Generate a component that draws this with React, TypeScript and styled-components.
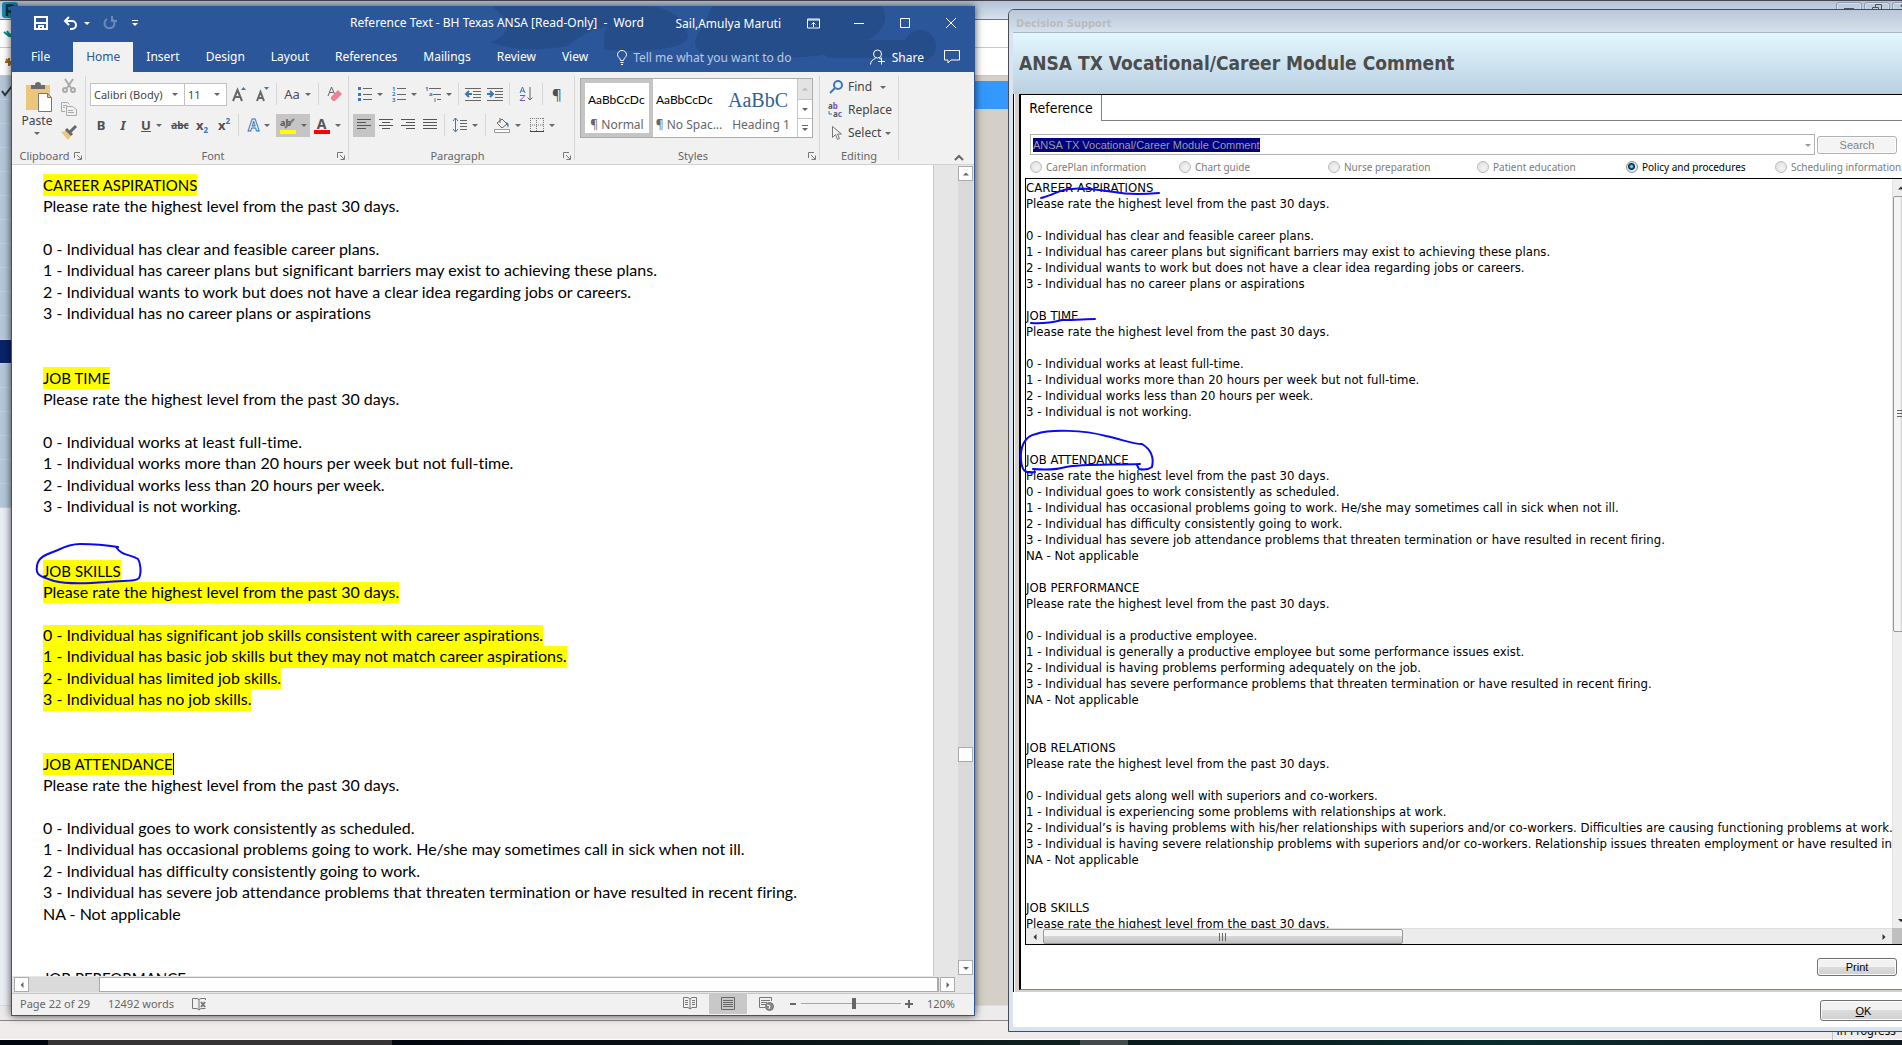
import React from 'react';
import styled, { createGlobalStyle, css } from 'styled-components';

const UI = '"Noto Sans", "Open Sans", sans-serif';
const TAHOMA = '"DejaVu Sans Condensed", "DejaVu Sans", sans-serif';
const CALIBRI = 'Lato, "Open Sans", sans-serif';
const SANS = '"Liberation Sans", sans-serif';
const WORD_BLUE = '#2b579a';

const GlobalStyle = createGlobalStyle`
  *, *::before, *::after { box-sizing: border-box; }
  html, body { margin: 0; background: #d4d0c8; overflow: hidden; }
  button, input, select { margin: 0; padding: 0; border: 0; background: none; color: inherit; font: inherit; border-radius: 0; }
  p, h1, h2 { margin: 0; font: inherit; }
`;

/* ---------- desktop ---------- */

const Desktop = styled.div`
  position: relative;
  display: grid;
  grid-template-columns: 964fr 894fr;
  column-gap: 33px;
  height: 100vh;
  padding: 6px 0 13px 11px;
  overflow: hidden;
  font-family: ${UI};
  font-size: 12px;
`;

const Backdrop = styled.div`
  position: absolute;
  inset: 0;
  display: flex;
  flex-direction: column;
  background: #d4d0c8;
`;
const BackTitle = styled.div`
  display: flex;
  justify-content: space-between;
  height: 20px;
  padding: 1px 0 0 2px;
  border-top: 1px solid #45454f;
  border-bottom: 1px solid #70747c;
  background: linear-gradient(#b4c2d4, #d6e2ef);
`;
const BackButtons = styled.div`
  display: flex;
  gap: 2px;
  margin-right: -16px;
`;
const BackButton = styled.button`
  width: 26px;
  height: 16px;
  border: 1px solid #8d99b0;
  border-radius: 3px;
  box-shadow: inset 0 0 0 1px #d8e1ec;
  display: flex;
  justify-content: center;
`;
const BackBar = styled.div`
  height: 28px;
  padding-left: 4px;
  display: flex;
  align-items: center;
  background: #fff;
  border-bottom: 1px solid #c9c9c9;
`;
const BackMain = styled.div`
  flex: 1;
  display: flex;
  min-height: 0;
`;
const Tree = styled.div`
  width: 203px;
  background: #ebeff5;
`;
const TreeRow = styled.div<{ $on?: boolean }>`
  height: 24px;
  padding: 7px 0 0 2px;
  background: ${p => (p.$on ? '#0a246a' : '#b5c7d9')};
  border-bottom: 1px solid #cdd0d2;
`;
const Band = styled.div`
  flex: 1;
  padding-top: 5px;
  &::before { content: ''; display: block; height: 28px; background: #3399ff; }
`;
const BackFoot = styled.div`
  height: 16px;
  background: #ececec;
  border-top: 1px solid #e0ddd8;
  border-bottom: 1px solid #8a8584;
`;
const BackStatus = styled.div`
  height: 19px;
  display: flex;
  justify-content: flex-end;
  align-items: center;
  padding-right: 6px;
  background: #f0eceb;
  border-bottom: 1px solid #fff;
  font: 12px/20px ${TAHOMA};
  span { border-left: 1px solid #c8c4c2; padding-left: 4px; height: 19px; }
`;
const Taskbar = styled.div`
  height: 5px;
  background: linear-gradient(90deg, #02060e 0 48px, #363435 48px 392px, #02060e 392px, #10201f 1080px, #44494b 1080px 1128px, #0b1a1c 1128px, #082c2d 1500px, #10181f);
`;

/* ---------- Word window ---------- */

const WordWindow = styled.section`
  position: relative;
  display: flex;
  flex-direction: column;
  min-width: 0;
  min-height: 0;
  margin-bottom: 16px;
  border: 1px solid ${WORD_BLUE};
  border-top: 0;
  background: #fff;
  box-shadow: 0 0 8px rgba(0, 0, 0, 0.7);
`;
const WordHeader = styled.header`
  position: relative;
  background: ${WORD_BLUE};
  color: #fff;
`;
const HeaderArt = styled.svg`
  position: absolute;
  right: 0;
  top: 0;
`;
const TitleRow = styled.div`
  position: relative;
  display: grid;
  grid-template-columns: 338px 1fr auto;
  align-items: center;
  height: 36px;
  padding-bottom: 2px;
`;
const QuickAccess = styled.div`
  display: flex;
  align-items: center;
  padding-left: 20px;
`;
const QuickButton = styled.button<{ $w: number; $faded?: boolean }>`
  width: ${p => p.$w}px;
  height: 24px;
  display: inline-flex;
  align-items: center;
  justify-content: center;
  gap: 6px;
  opacity: ${p => (p.$faded ? 0.3 : 1)};
`;
const DocTitle = styled.h1`
  white-space: pre;
  line-height: 18px;
`;
const WindowControls = styled.div`
  display: flex;
  align-items: center;
`;
const UserName = styled.span`
  margin-right: 9px;
  white-space: nowrap;
`;
const WinButton = styled.button`
  width: 46px;
  height: 34px;
  display: grid;
  place-items: center;
`;
const TabRow = styled.nav`
  position: relative;
  display: flex;
  height: 30px;
  padding-right: 14px;
`;
const Tab = styled.button<{ $on?: boolean }>`
  padding: 0 13px;
  line-height: 30px;
  ${p => p.$on && css`background: #f1f1f1; color: ${WORD_BLUE};`}
  &:first-child { padding: 0 23px 0 19px; }
`;
const TellMe = styled.label`
  display: flex;
  align-items: center;
  gap: 5px;
  margin-left: 16px;
  flex: 1;
  input { width: 180px; color: #b9c9e2; }
  input::placeholder { color: #b9c9e2; opacity: 1; }
`;
const ShareButton = styled.button`
  display: flex;
  align-items: center;
  gap: 6px;
  margin-left: 20px;
`;

const Ribbon = styled.div`
  display: flex;
  height: 93px;
  padding-top: 4px;
  background: #f1f1f1;
  border-bottom: 1px solid #d2d2d2;
  color: #444;
`;
const Group = styled.section<{ $w: number }>`
  display: flex;
  flex-direction: column;
  width: ${p => p.$w}px;
  flex: none;
  padding: 6px 1px 0 0;
  background: linear-gradient(#d6d6d6, #d6d6d6) right top / 1px calc(100% - 4px) no-repeat;
`;
const GroupBody = styled.div`
  display: flex;
  flex: 1;
  min-height: 0;
`;
const Rows = styled.div`
  display: flex;
  flex-direction: column;
  gap: 7px;
  padding-left: 4px;
`;
const Row = styled.div`
  display: flex;
  align-items: center;
  height: 24px;
`;
const GroupFoot = styled.div`
  display: flex;
  align-items: center;
  height: 16px;
  padding: 0 3px;
  color: #666;
  font-size: 11px;
  line-height: 16px;
  span { flex: 1; text-align: center; }
`;
const Tool = styled.button<{ $w?: number; $on?: boolean }>`
  width: ${p => p.$w ?? 22}px;
  height: 23px;
  flex: none;
  display: flex;
  align-items: center;
  justify-content: center;
  gap: 5px;
  background: ${p => (p.$on ? '#c5c5c5' : 'transparent')};
  font-size: 14px;
  line-height: 22px;
`;
const Sep = styled.i`
  width: 1px;
  height: 22px;
  margin: 0 3px;
  background: #d6d6d6;
`;
const ComboBox = styled.span<{ $w: number }>`
  display: flex;
  align-items: center;
  width: ${p => p.$w}px;
  height: 23px;
  padding-right: 6px;
  background: #fff;
  border: 1px solid #c2c2c2;
  font-size: 11px;
  & + & { border-left: 0; }
  select { appearance: none; flex: 1; min-width: 0; height: 21px; padding-left: 3px; color: #444; outline: 0; }
`;
const PasteButton = styled.button`
  display: flex;
  flex-direction: column;
  align-items: center;
  width: 50px;
  line-height: 18px;
`;
const ClipColumn = styled.div`
  display: flex;
  flex-direction: column;
  margin: -8px 0 0 -4px;
`;
const Gallery = styled.div`
  display: flex;
  width: 233px;
  height: 60px;
  margin: -4px 0 0 5px;
  border: 1px solid #ababab;
  background: #fff;
`;
const StyleCard = styled.button<{ $on?: boolean }>`
  width: 72px;
  display: flex;
  flex-direction: column;
  align-items: center;
  justify-content: center;
  padding: 0 3px;
  overflow: hidden;
  white-space: nowrap;
  line-height: 16px;
  color: #666;
  border: 4px solid ${p => (p.$on ? '#c5c5c5' : 'transparent')};
  border-width: ${p => (p.$on ? '4px' : '4px 0')};
`;
const Sample = styled.span<{ $big?: boolean }>`
  width: 100%;
  overflow: hidden;
  text-align: left;
  line-height: 34px;
  font-family: ${p => (p.$big ? '"Liberation Serif", serif' : CALIBRI)};
  font-size: ${p => (p.$big ? 20 : 12)}px;
  color: ${p => (p.$big ? '#2e6399' : '#000')};
`;
const GalleryScroll = styled.div`
  margin-left: auto;
  width: 15px;
  display: grid;
  grid-template-rows: 20px 1fr 1fr;
  border-left: 1px solid #c6c6c6;
  button { display: grid; place-items: center; }
  button:first-child { background: #e3e3e3; }
  button + button { border-top: 1px solid #c6c6c6; }
`;
const EditList = styled.div`
  display: flex;
  flex-direction: column;
  padding-left: 8px;
  margin-top: -7px;
`;
const EditButton = styled.button`
  height: 23px;
  display: flex;
  align-items: center;
  gap: 4px;
  svg:first-child { width: 16px; }
`;
const Collapse = styled.button`
  margin-left: auto;
  align-self: flex-end;
  width: 30px;
  height: 16px;
`;

const DocArea = styled.div`
  display: flex;
  flex: 1;
  min-height: 0;
`;
const Page = styled.main`
  flex: 1;
  min-width: 0;
  overflow: hidden;
  padding: 9px 0 0 31px;
  font-family: ${CALIBRI};
  font-size: 16px;
  font-variant-ligatures: none;
  color: #000;
  border-right: 1px solid #c6c6c6;
`;
const DocSection = styled.div`
  display: grid;
  grid-template-rows: repeat(4, 22px 21px);
  grid-auto-rows: 21px;
  justify-items: start;
  white-space: nowrap;
`;
const DocLine = styled.p<{ $title?: boolean; $hl?: boolean; $caret?: boolean }>`
  font-size: ${p => (p.$title ? 15 : 16)}px;
  line-height: ${p => (p.$title ? 22 : 20)}px;
  ${p => p.$hl && css`background: #ff0;`}
  ${p => p.$caret && css`border-right: 1px solid #000;`}
`;
const VScroll = styled.div`
  width: 40px;
  padding: 1px 1px 1px 24px;
  display: flex;
  background: #e6e6e6;
`;
const VTrack = styled.div`
  flex: 1;
  display: flex;
  flex-direction: column;
  background: #dadada;
`;
const TrackSpace = styled.i<{ $share: number }>`
  flex: ${p => p.$share};
`;
const ScrollButton = styled.button`
  width: 15px;
  height: 15px;
  flex: none;
  display: grid;
  place-items: center;
  background: #fff;
  border: 1px solid #ababab;
`;
const HScroll = styled.div`
  height: 17px;
  display: flex;
  padding: 1px 19px 1px 2px;
  background: #e6e6e6;
`;
const HTrack = styled.div`
  flex: 1;
  margin-right: 1px;
  display: flex;
  justify-content: flex-end;
  background: #dadada;
  i { width: calc(100% - 70px); background: #fff; border: 1px solid #ababab; border-right-width: 2px; }
`;
const StatusBar = styled.footer`
  display: flex;
  align-items: center;
  height: 22px;
  padding: 0 19px 2px 8px;
  background: #f1f1f1;
  border-top: 1px solid #c6c6c6;
  color: #666;
  font-size: 11px;
`;
const StatusText = styled.span`
  margin-right: 18px;
`;
const ViewGroup = styled.div`
  display: flex;
  align-items: center;
  margin-left: auto;
`;
const ViewButton = styled.button<{ $on?: boolean }>`
  width: 38px;
  height: 21px;
  display: grid;
  place-items: center;
  background: ${p => (p.$on ? '#c8c8c8' : 'transparent')};
`;
const ZoomSign = styled.button`
  width: 16px;
  display: grid;
  place-items: center;
`;
const ZoomSlider = styled.input`
  appearance: none;
  width: 100px;
  height: 12px;
  background: linear-gradient(#a6a6a6, #a6a6a6) center / 100% 1px no-repeat;
  &::-webkit-slider-thumb { appearance: none; width: 4px; height: 11px; background: #666; }
`;
const ZoomValue = styled.span`
  width: 38px;
  text-align: right;
`;

/* ---------- Decision support dialog ---------- */

const Dialog = styled.section`
  position: relative;
  display: flex;
  flex-direction: column;
  min-width: 0;
  min-height: 0;
  margin: 3px -12px 0 0;
  padding: 0 4px 4px 4px;
  border: 1px solid #4b4b52;
  border-radius: 6px 6px 0 0;
  background: #d8e4f1;
  overflow: hidden;
  font-family: ${TAHOMA};
`;
const DialogTitle = styled.h2`
  height: 22px;
  margin: 0 -4px;
  padding-left: 7px;
  font: bold 11px/27px ${TAHOMA};
  color: #b9bcc0;
  background: linear-gradient(#b9c7d8, #d6e1ee);
`;
const DialogHead = styled.div`
  height: 62px;
  padding-left: 6px;
  font-size: 19px;
  font-weight: bold;
  line-height: 61px;
  color: #4c4c4c;
  background: linear-gradient(#e2f7fe, #bad0e1);
  border-top: 1px solid #a9b7c6;
`;
const DialogBody = styled.div`
  flex: 1;
  display: flex;
  flex-direction: column;
  min-height: 0;
  padding-left: 2px;
  background: linear-gradient(90deg, #000 1px, #fff 1px 2px, #d4cfc8 2px);
`;
const Panel = styled.div`
  flex: 1;
  display: flex;
  flex-direction: column;
  min-height: 0;
  margin: 0 0 2px 4px;
  background: #fff;
  border: solid #000;
  border-width: 1px 0 0 2px;
  border-bottom: 1px solid #80808a;
`;
const DialogTabs = styled.div`
  display: flex;
  height: 26px;
  &::after { content: ''; flex: 1; border-bottom: 1px solid #80808a; }
`;
const DialogTab = styled.button`
  width: 81px;
  font-size: 14px;
  line-height: 24px;
  border-right: 1px solid #80808a;
`;
const SearchRow = styled.div`
  display: flex;
  align-items: center;
  gap: 2px;
  margin: 13px 12px 0 9px;
`;
const SearchBox = styled.label`
  flex: 1;
  display: flex;
  align-items: center;
  justify-content: space-between;
  height: 21px;
  padding: 0 3px 0 2px;
  border: 1px solid #b1b1b1;
  font: 11px/14px ${SANS};
  input { field-sizing: content; height: 14px; background: #000080; color: #9c9c9c; outline: 0; }
`;
const PushButton = styled.button<{ $wide?: boolean }>`
  width: ${p => (p.$wide ? 87 : 80)}px;
  height: ${p => (p.$wide ? 21 : 18)}px;
  border: 1px solid #707070;
  border-radius: 3px;
  box-shadow: inset 0 0 0 1px #fcfcfc;
  background: linear-gradient(#f2f2f2 0 50%, #dcdcdc 50%, #cfcfcf);
  font: 11px/14px ${SANS};
  &:disabled { color: #838383; border-color: #adb2b5; background: #f4f4f4; }
`;
const RadioRow = styled.div`
  display: grid;
  grid-template-columns: repeat(6, 149px);
  padding: 5px 0 4px 9px;
`;
const RadioLabel = styled.label<{ $on?: boolean }>`
  display: flex;
  align-items: center;
  gap: 4px;
  height: 14px;
  font: 10px/14px ${UI};
  color: ${p => (p.$on ? '#000' : '#7b7b7b')};
  white-space: nowrap;
  input {
    appearance: none;
    width: 12px;
    height: 12px;
    flex: none;
    border: 1px solid #bcbcbc;
    border-radius: 50%;
    background: radial-gradient(circle at 60% 60%, #f4f4f4, #dcdcdc);
  }
  input:checked {
    border-color: #8e8f8f;
    background: radial-gradient(circle at 45% 45%, #5fd0f0 0 1px, #0b5f8c 2px, #123 3px, #e8e8e8 4px);
  }
`;
const ReferenceBox = styled.div`
  flex: 1;
  display: grid;
  grid-template: minmax(0, 1fr) 16px / minmax(0, 1fr) 17px;
  min-height: 0;
  margin: 0 0 0 4px;
  border: 1px solid #000;
  border-right: 0;
`;
const ReferenceText = styled.div`
  overflow: hidden;
  padding-top: 1px;
  font-size: 13px;
  line-height: 16px;
  white-space: pre;
  color: #000;
  p { min-height: 16px; }
`;
const OldV = styled.div`
  display: grid;
  grid-template-rows: 17px 437fr 280fr 17px;
  background: #eee;
  border-left: 1px solid #e2e2e2;
  button { display: grid; place-items: center; }
`;
const OldH = styled.div`
  display: grid;
  grid-template-columns: 17px 361fr 473fr 17px;
  background: #ececec;
  border-top: 1px solid #dedede;
  button { display: grid; place-items: center; }
`;
const Thumb = styled.div<{ $v?: boolean }>`
  display: grid;
  place-items: center;
  border: 1px solid #999;
  border-radius: 2px;
  background: linear-gradient(${p => (p.$v ? '90deg' : '180deg')}, #f4f4f4 0 45%, #d8d8d8 50%, #c2c2c6);
`;
const Corner = styled.div`
  background: #bfbfbf;
`;
const PrintRow = styled.div`
  display: flex;
  justify-content: flex-end;
  padding: 13px 12px;
`;
const DialogFoot = styled.div`
  height: 35px;
  display: flex;
  justify-content: flex-end;
  padding: 8px 2px 6px;
  background: #fff;
`;
const Ink = styled.svg`
  position: absolute;
  pointer-events: none;
  overflow: visible;
  fill: none;
  stroke: #0a0af0;
  stroke-width: 2;
  stroke-linecap: round;
  stroke-linejoin: round;
`;
const WordInk = styled(Ink)`left: 22px; top: 538px;`;
const DialogInk = styled(Ink)`left: 11px; top: 176px;`;

/* ---------- icons ---------- */

type IconProps = { w?: number; h?: number; children: React.ReactNode; color?: string; sw?: number };
const Icon = ({ w = 16, h = 16, children, color = 'currentColor', sw = 1 }: IconProps) => (
  <svg width={w} height={h} viewBox={`0 0 ${w} ${h}`} fill="none" stroke={color} strokeWidth={sw} overflow="visible" aria-hidden="true">
    {children}
  </svg>
);
const Caret = ({ color = '#666', dir = 'down' }: { color?: string; dir?: 'down' | 'up' | 'left' | 'right' }) => {
  const d = { down: 'M0 2h6l-3 3z', up: 'M0 4.500h6l-3-3z', left: 'M4.500 0v6l-3-3z', right: 'M1.500 0v6l3-3z' }[dir];
  return <svg width="6" height="6" viewBox="0 0 6 6" aria-hidden="true"><path d={d} fill={color} /></svg>;
};
const Launcher = () => (
  <Icon w={8} h={8} color="#777"><path d="M.5 6V.5H6M3 3l4 4M7.500 3.500v4h-4" /></Icon>
);
const Lines = ({ ends }: { ends: [number, number][] }) => (
  <Icon w={14} h={12} color="#555">{ends.map(([a, b], i) => <path key={i} d={`M${a} ${i * 3 + 0.5}H${b}`} />)}</Icon>
);
const Glyph = styled.span<{ $b?: boolean; $i?: boolean; $u?: boolean; $s?: boolean; $size?: number }>`
  font-weight: ${p => (p.$b ? 700 : 400)};
  font-style: ${p => (p.$i ? 'italic' : 'normal')};
  font-size: ${p => p.$size ?? 13}px;
  line-height: 16px;
  text-decoration: ${p => (p.$u ? 'underline' : p.$s ? 'line-through' : 'none')};
  color: #505050;
  sub, sup { font-size: 8px; color: #3b78b5; line-height: 8px; }
  sub { vertical-align: -3px; }
  sup { vertical-align: 6px; }
`;
const FontColor = styled.span<{ $c: string }>`
  width: 16px;
  height: 17px;
  display: grid;
  place-items: center;
  border-bottom: 4px solid ${p => p.$c};
  font: bold 14px/13px ${UI};
  color: #555;
`;
const Effect = styled.span`
  font: bold 16px/20px ${UI};
  color: #fff;
  -webkit-text-stroke: 1px #3b78b5;
`;

/* ---------- content ---------- */

type Line = string;
const rate = 'Please rate the highest level from the past 30 days.';
const attendance = [
  '0 - Individual goes to work consistently as scheduled.',
  '1 - Individual has occasional problems going to work. He/she may sometimes call in sick when not ill.',
  '2 - Individual has difficulty consistently going to work.',
  '3 - Individual has severe job attendance problems that threaten termination or have resulted in recent firing.',
  'NA - Not applicable',
];
const aspirations = [
  '0 - Individual has clear and feasible career plans.',
  '1 - Individual has career plans but significant barriers may exist to achieving these plans.',
  '2 - Individual wants to work but does not have a clear idea regarding jobs or careers.',
  '3 - Individual has no career plans or aspirations',
];
const jobTime = [
  '0 - Individual works at least full-time.',
  '1 - Individual works more than 20 hours per week but not full-time.',
  '2 - Individual works less than 20 hours per week.',
  '3 - Individual is not working.',
];
const docSections: { lines: Line[]; hl: 'title' | 'all' | 'none'; caret?: boolean }[] = [
  { lines: ['CAREER ASPIRATIONS', rate, '', ...aspirations, '', ''], hl: 'title' },
  { lines: ['JOB TIME', rate, '', ...jobTime, '', ''], hl: 'title' },
  {
    lines: ['JOB SKILLS', rate, '',
      '0 - Individual has significant job skills consistent with career aspirations.',
      '1 - Individual has basic job skills but they may not match career aspirations.',
      '2 - Individual has limited job skills.',
      '3 - Individual has no job skills.', '', ''],
    hl: 'all',
  },
  { lines: ['JOB ATTENDANCE', rate, '', ...attendance, '', ''], hl: 'title', caret: true },
  { lines: ['JOB PERFORMANCE'], hl: 'none' },
];
const referenceLines: Line[] = [
  'CAREER ASPIRATIONS', rate, '', ...aspirations, '',
  'JOB TIME', rate, '', ...jobTime, '', '',
  'JOB ATTENDANCE', rate, ...attendance, '',
  'JOB PERFORMANCE', rate, '',
  '0 - Individual is a productive employee.',
  '1 - Individual is generally a productive employee but some performance issues exist.',
  '2 - Individual is having problems performing adequately on the job.',
  '3 - Individual has severe performance problems that threaten termination or have resulted in recent firing.',
  'NA - Not applicable', '', '',
  'JOB RELATIONS', rate, '',
  '0 - Individual gets along well with superiors and co-workers.',
  '1 - Individual is experiencing some problems with relationships at work.',
  '2 - Individual’s is having problems with his/her relationships with superiors and/or co-workers. Difficulties are causing functioning problems at work.',
  '3 - Individual is having severe relationship problems with superiors and/or co-workers. Relationship issues threaten employment or have resulted in',
  'NA - Not applicable', '', '',
  'JOB SKILLS', rate,
];
const tabs = ['File', 'Home', 'Insert', 'Design', 'Layout', 'References', 'Mailings', 'Review', 'View'];
const radios = ['CarePlan information', 'Chart guide', 'Nurse preparation', 'Patient education', 'Policy and procedures', 'Scheduling information'];

function BackgroundApp() {
  return (
    <Backdrop>
      <BackTitle>
        <Icon w={16} h={16}>
          <rect width="16" height="16" rx="3" fill="#1d86ad" stroke="none" />
          <path d="M5 14V3.500H9a3 3 0 0 1 0 6H6" stroke="#0a2e48" strokeWidth="2.500" />
        </Icon>
        <BackButtons>
          <BackButton aria-label="Minimize application"><Icon w={12} h={12} color="#555" sw={2}><path d="M1 6h10" /></Icon></BackButton>
          <BackButton aria-label="Restore application"><Icon w={12} h={12} color="#555"><path d="M4.500 5V1.500h6v6H8M1.500 4.500h6v5h-6z" /></Icon></BackButton>
          <BackButton aria-label="Close application"><Icon w={12} h={12} color="#555" sw={2}><path d="M2 2l8 8M10 2l-8 8" /></Icon></BackButton>
        </BackButtons>
      </BackTitle>
      <BackBar><Icon w={10} h={10} color="#0b8a8a" sw={2}><path d="M0 3l5 4 5-4M3 2l4 6" /></Icon></BackBar>
      <BackBar><Icon w={10} h={10} color="#a56a1f" sw={2}><path d="M5 1v8M1 5h8M2 2l6 6" /></Icon></BackBar>
      <BackMain>
        <Tree>
          {Array.from({ length: 18 }, (_, i) => (
            <TreeRow key={i} $on={i === 11}>
              {i === 0 && <Icon w={10} h={10} color="#333" sw={2}><path d="M0 5l3 4 7-9" /></Icon>}
            </TreeRow>
          ))}
        </Tree>
        <Band />
      </BackMain>
      <BackFoot />
      <BackStatus><span>In Progress</span></BackStatus>
      <Taskbar />
    </Backdrop>
  );
}

function Header() {
  return (
    <WordHeader>
      <HeaderArt width="500" height="66" viewBox="0 0 500 66" aria-hidden="true">
        <g fill="#234a85" opacity="0.75">
          <path d="M18 0h150q-8 14-34 20t-40 20q-50 8-78-4q24-8 14-24z" />
          <path d="M130 32a42 32 0 1 1 84 0q-10 16-84 12z" />
          <path d="M238 0h170q12 20-20 38t-150 14q-24-8-14-24t14-28z" />
          <circle cx="446" cy="40" r="16" />
          <path d="M336 34h98q10 18-20 18h-60z" />
        </g>
      </HeaderArt>
      <TitleRow>
        <QuickAccess>
          <QuickButton $w={18} aria-label="Save">
            <Icon w={14} h={14} sw={2}><path d="M1 1h12v12H1zM1 7h12M5 13v-3h4v3" /></Icon>
          </QuickButton>
          <QuickButton $w={52} aria-label="Undo">
            <Icon w={15} h={14} sw={2}><path d="M6 1L2 5l4 4M2 5h7a4 4 0 0 1 0 8H7" /></Icon>
            <Caret color="#fff" />
          </QuickButton>
          <QuickButton $w={16} $faded aria-label="Repeat">
            <Icon w={14} h={14} sw={2}><path d="M9 3a5 5 0 1 1-5 0M9 0v5h5" /></Icon>
          </QuickButton>
          <QuickButton $w={34} aria-label="Customize Quick Access Toolbar">
            <Icon w={6} h={8}><path d="M0 1.500h6" /><path d="M0 4h6l-3 3z" fill="#fff" stroke="none" /></Icon>
          </QuickButton>
        </QuickAccess>
        <DocTitle>Reference Text - BH Texas ANSA [Read-Only]  -  Word</DocTitle>
        <WindowControls>
          <UserName>Sail,Amulya Maruti</UserName>
          <WinButton aria-label="Ribbon display options">
            <Icon w={13} h={11}><path d="M.5 1v9h12V1zM.5 2h12M6.500 9V4.500M4.500 6.500l2-2 2 2" /></Icon>
          </WinButton>
          <WinButton aria-label="Minimize"><Icon w={10} h={10}><path d="M0 5.500h10" /></Icon></WinButton>
          <WinButton aria-label="Maximize"><Icon w={10} h={10}><path d="M.5.5h9v9h-9z" /></Icon></WinButton>
          <WinButton aria-label="Close"><Icon w={10} h={10}><path d="M0 0l10 10M10 0L0 10" /></Icon></WinButton>
        </WindowControls>
      </TitleRow>
      <TabRow>
        {tabs.map(t => <Tab key={t} $on={t === 'Home'}>{t}</Tab>)}
        <TellMe>
          <Icon w={11} h={15}><path d="M3.500 10.500C3.500 8 .5 7.500 .5 4.500a4.500 4 0 0 1 9 0c0 3-3 3.500-3 6zM3.500 12.500h3M4 14.500h2" /></Icon>
          <input placeholder="Tell me what you want to do" aria-label="Tell me what you want to do" />
        </TellMe>
        <ShareButton>
          <Icon w={16} h={16}><circle cx="7.500" cy="5" r="4" /><path d="M.5 15.500c0-3 2-5 5-6M9 9l2 1M11.500 8.500v7M8 12.500h7" /></Icon>
          Share
        </ShareButton>
        <ShareButton aria-label="Comments">
          <Icon w={16} h={14}><path d="M.5.5h15v9.500H7l-3 3v-3H.5z" /></Icon>
        </ShareButton>
      </TabRow>
    </WordHeader>
  );
}

function RibbonBar() {
  const blue = '#3b78b5';
  return (
    <Ribbon>
      <Group $w={74}>
        <GroupBody>
          <PasteButton>
            <Icon w={30} h={30}>
              <path d="M4 3h24v25H4z" fill="#ecc67c" stroke="none" />
              <path d="M9 7V3h4a3 3 0 0 1 6 0h4v4z" fill="#6b6b6b" stroke="none" />
              <path d="M16.500 11.500h9l4 4v14h-13zM25.500 11.500v4h4" fill="#fff" stroke="#777" />
            </Icon>
            Paste
            <Caret />
          </PasteButton>
          <ClipColumn>
            <Tool aria-label="Cut"><Icon w={14} h={16} color="#aaa" sw={2}><path d="M3 1l6 9M11 1L5 10" /><circle cx="3" cy="12" r="2" /><circle cx="11" cy="12" r="2" /></Icon></Tool>
            <Tool aria-label="Copy"><Icon w={16} h={16} color="#aaa"><path d="M4 10.500H.5V1.500h6l2 2M5.500 5.500h6l4 3v6h-10zM7 9.500h5M7 11.500h6M2 4.500h4M2 6.500h2" /></Icon></Tool>
            <Tool aria-label="Format Painter"><Icon w={16} h={16}><path d="M0 8l5-1 5 5-3 4z" fill="#ecc67c" stroke="none" /><path d="M5 5l6 6M9 8l6-6" stroke="#666" strokeWidth="3" /></Icon></Tool>
          </ClipColumn>
        </GroupBody>
        <GroupFoot><span>Clipboard</span><Launcher /></GroupFoot>
      </Group>

      <Group $w={263}>
        <GroupBody>
          <Rows>
            <Row>
              <ComboBox $w={95}><select aria-label="Font"><option>Calibri (Body)</option></select><Caret /></ComboBox>
              <ComboBox $w={42}><select aria-label="Font size"><option>11</option></select><Caret /></ComboBox>
              <Tool $w={24} aria-label="Increase font size"><Icon w={14} h={16} color="#666" sw={2}><path d="M1 15L5.500 4 10 15M3 11h5" /><path d="M9 4l2.500-3L14 4z" fill={blue} stroke="none" /></Icon></Tool>
              <Tool aria-label="Decrease font size"><Icon w={14} h={16} color="#666" sw={2}><path d="M2 15l3.500-9L9 15M4 12h4" /><path d="M9 1l2.500 3L14 1z" fill={blue} stroke="none" /></Icon></Tool>
              <Sep />
              <Tool $w={35} aria-label="Change case"><Glyph>Aa</Glyph><Caret /></Tool>
              <Sep />
              <Tool $w={26} aria-label="Clear formatting"><Icon w={16} h={16} color="#666"><path d="M1 10L4.500 1 8 9M2.500 6.500h4" /><path d="M4 11l7-7 4 4-7 7H6l-2-2z" fill="#ea8496" stroke="none" /></Icon></Tool>
            </Row>
            <Row>
              <Tool aria-label="Bold"><Glyph $b>B</Glyph></Tool>
              <Tool aria-label="Italic"><Glyph $b $i>I</Glyph></Tool>
              <Tool $w={35} aria-label="Underline"><Glyph $b $u>U</Glyph><Caret /></Tool>
              <Tool aria-label="Strikethrough"><Glyph $b $s $size={10}>abc</Glyph></Tool>
              <Tool aria-label="Subscript"><Glyph $b>x<sub>2</sub></Glyph></Tool>
              <Tool aria-label="Superscript"><Glyph $b>x<sup>2</sup></Glyph></Tool>
              <Sep />
              <Tool $w={34} aria-label="Text effects"><Effect>A</Effect><Caret /></Tool>
              <Tool $w={34} $on aria-label="Text highlight color">
                <Icon w={16} h={17}><text x="0" y="9" fontSize="9" fontWeight="bold" fill="#555" stroke="none" fontFamily="Noto Sans">ab</text><path d="M5 11L14 2" stroke="#777" strokeWidth="2" /><path d="M0 15h16" stroke="#ff0" strokeWidth="4" /></Icon>
                <Caret />
              </Tool>
              <Tool $w={34} aria-label="Font color"><FontColor $c="#f00">A</FontColor><Caret /></Tool>
            </Row>
          </Rows>
        </GroupBody>
        <GroupFoot><span>Font</span><Launcher /></GroupFoot>
      </Group>

      <Group $w={226}>
        <GroupBody>
          <Rows>
            <Row>
              <Tool $w={34} aria-label="Bullets"><Icon w={14} h={14} color="#666"><path d="M5 1.500h9M5 7.500h9M5 12.500h9" /><path d="M0 1.500h3M0 7.500h3M0 12.500h3" stroke={blue} strokeWidth="3" /></Icon><Caret /></Tool>
              <Tool $w={34} aria-label="Numbering"><Icon w={14} h={18} color="#666"><path d="M5 3.500h9M5 9.500h9M5 14.500h9" /><g fill={blue} stroke="none" fontSize="6" fontFamily="Noto Sans" fontWeight="bold"><text x="0" y="6">1</text><text x="0" y="11">2</text><text x="0" y="17">3</text></g></Icon><Caret /></Tool>
              <Tool $w={34} aria-label="Multilevel list"><Icon w={16} h={18} color="#666"><path d="M4 3.500h12M8 9.500h8M12 14.500h4" /><g fill={blue} stroke="none" fontSize="6" fontFamily="Noto Sans" fontWeight="bold"><text x="0" y="6">1</text><text x="4" y="11">a</text><text x="9" y="17">i</text></g></Icon><Caret /></Tool>
              <Sep />
              <Tool aria-label="Decrease indent"><Icon w={16} h={14} color="#666"><path d="M0 1.500h16M8 4.500h8M8 7.500h8M8 10.500h8M0 13.500h16" /><path d="M7 7H1M4 4L1 7l3 3" stroke={blue} strokeWidth="2" /></Icon></Tool>
              <Tool aria-label="Increase indent"><Icon w={16} h={14} color="#666"><path d="M0 1.500h16M8 4.500h8M8 7.500h8M8 10.500h8M0 13.500h16" /><path d="M0 7h6M3 4l3 3-3 3" stroke={blue} strokeWidth="2" /></Icon></Tool>
              <Sep />
              <Tool $w={26} aria-label="Sort"><Icon w={14} h={16} color="#666"><path d="M1 7l2.500-6L6 7M2 5h3" stroke={blue} /><path d="M1 9.500h5l-5 5h5" stroke="#8a4da8" /><path d="M11 1v13M8.500 11.500L11 14l2.500-2.500" /></Icon></Tool>
              <Sep />
              <Tool aria-label="Show paragraph marks"><Glyph $size={15}>¶</Glyph></Tool>
            </Row>
            <Row>
              <Tool $on aria-label="Align left"><Lines ends={[[0, 14], [0, 9], [0, 14], [0, 9]]} /></Tool>
              <Tool aria-label="Center"><Lines ends={[[0, 14], [3, 11], [0, 14], [3, 11]]} /></Tool>
              <Tool aria-label="Align right"><Lines ends={[[0, 14], [5, 14], [0, 14], [5, 14]]} /></Tool>
              <Tool aria-label="Justify"><Lines ends={[[0, 14], [0, 14], [0, 14], [0, 14]]} /></Tool>
              <Sep />
              <Tool $w={34} aria-label="Line spacing"><Icon w={14} h={16} color="#666"><path d="M7 3.500h7M7 6.500h7M7 9.500h7M7 12.500h7" /><path d="M2.500 1v14M0 4l2.500-3L5 4M0 12l2.500 3L5 12" stroke={blue} /></Icon><Caret /></Tool>
              <Sep />
              <Tool $w={36} aria-label="Shading"><Icon w={16} h={16} color="#666"><path d="M3 6l5-4 5 5-5 4zM6 1v5" /><path d="M12 5q4 1 2 6z" fill={blue} stroke="none" /><path d="M.5 12.500h15v3H.5z" fill="#fff" stroke="#999" /></Icon><Caret /></Tool>
              <Tool $w={34} aria-label="Borders"><Icon w={14} h={14} color="#777"><path d="M.5 0v14M6.500 0v14M13.500 0v14M0 .5h14M0 7h14" strokeDasharray="1 1" /><path d="M0 13.500h14" stroke="#444" /></Icon><Caret /></Tool>
            </Row>
          </Rows>
        </GroupBody>
        <GroupFoot><span>Paragraph</span><Launcher /></GroupFoot>
      </Group>

      <Group $w={245}>
        <GroupBody>
          <Gallery>
            <StyleCard $on><Sample>AaBbCcDc</Sample>¶ Normal</StyleCard>
            <StyleCard><Sample>AaBbCcDc</Sample>¶ No Spac...</StyleCard>
            <StyleCard><Sample $big>AaBbC</Sample>Heading 1</StyleCard>
            <GalleryScroll>
              <button aria-label="Previous styles"><Caret dir="up" color="#bbb" /></button>
              <button aria-label="Next styles"><Caret /></button>
              <button aria-label="More styles"><Icon w={6} h={8} color="#666"><path d="M0 1.500h6" /><path d="M0 4h6l-3 3z" fill="#666" stroke="none" /></Icon></button>
            </GalleryScroll>
          </Gallery>
        </GroupBody>
        <GroupFoot><span>Styles</span><Launcher /></GroupFoot>
      </Group>

      <Group $w={79}>
        <GroupBody>
          <EditList>
            <EditButton><Icon w={14} h={14} color={blue} sw={2}><circle cx="9" cy="5" r="4" /><path d="M6 8l-5 5" /></Icon>Find<Tool as="span" $w={14}><Caret /></Tool></EditButton>
            <EditButton><Icon w={16} h={16}><g stroke="none" fontFamily="Noto Sans" fontSize="8" fontWeight="bold"><text x="0" y="7"><tspan fill="#555">a</tspan><tspan fill="#8a4da8">b</tspan></text><text x="5" y="15"><tspan fill="#555">a</tspan><tspan fill={blue}>c</tspan></text></g><path d="M1 9v3h3" stroke={blue} /></Icon>Replace</EditButton>
            <EditButton><Icon w={14} h={16} color="#777"><path d="M3.500 1.500v11l3-3 2 5 2-1-2-4.500h4z" /></Icon>Select<Caret /></EditButton>
          </EditList>
        </GroupBody>
        <GroupFoot><span>Editing</span></GroupFoot>
      </Group>
      <Collapse aria-label="Collapse the ribbon"><Icon w={10} h={6} color="#666" sw={2}><path d="M1 5l4-4 4 4" /></Icon></Collapse>
    </Ribbon>
  );
}

function Word() {
  return (
    <WordWindow>
      <Header />
      <RibbonBar />
      <DocArea>
        <Page>
          {docSections.map((s, i) => (
            <DocSection key={i}>
              {s.lines.map((l, j) => (
                <DocLine
                  key={j}
                  $title={j === 0}
                  $hl={s.hl === 'all' ? l !== '' : s.hl === 'title' && j === 0}
                  $caret={s.caret && j === 0}
                >
                  {l}
                </DocLine>
              ))}
            </DocSection>
          ))}
        </Page>
        <VScroll>
          <VTrack>
            <ScrollButton aria-label="Scroll up"><Caret dir="up" /></ScrollButton>
            <TrackSpace $share={565} />
            <ScrollButton as="div" />
            <TrackSpace $share={197} />
            <ScrollButton aria-label="Scroll down"><Caret /></ScrollButton>
          </VTrack>
        </VScroll>
      </DocArea>
      <HScroll>
        <ScrollButton aria-label="Scroll left"><Caret dir="left" /></ScrollButton>
        <HTrack><i /></HTrack>
        <ScrollButton aria-label="Scroll right"><Caret dir="right" /></ScrollButton>
      </HScroll>
      <StatusBar>
        <StatusText>Page 22 of 29</StatusText>
        <StatusText>12492 words</StatusText>
        <Icon w={15} h={14} color="#777"><path d="M7 2.500L5 1.500H.5v10H5l2 1.500V2.500l2-1h4.500V3M7 13l2-1.500h4.500" /><path d="M9 5l4 5M13 5l-4 5" strokeWidth="2" /></Icon>
        <ViewGroup>
          <ViewButton aria-label="Read mode"><Icon w={14} h={13} color="#777"><path d="M7 2L5 .5H.5v10H5L7 12l2-1.500h4.500V.5H9zM7 2v10M2 3.500h3M2 5.500h3M2 7.500h3M9 3.500h3M9 5.500h3M9 7.500h3" /></Icon></ViewButton>
          <ViewButton $on aria-label="Print layout"><Icon w={14} h={13} color="#666"><path d="M.5.5h13v12H.5zM2 3.500h10M2 5.500h10M2 7.500h10M2 9.500h10" /></Icon></ViewButton>
          <ViewButton aria-label="Web layout"><Icon w={15} h={14} color="#777"><path d="M6 10.500H.5V.5h12V4M2 3.500h9M2 5.500h6M2 7.500h5" /><circle cx="10.500" cy="9.500" r="4" fill="#888" /><path d="M8 8l3 1-1 3" stroke="#fff" /></Icon></ViewButton>
          <ZoomSign aria-label="Zoom out"><Icon w={8} h={8} color="#666" sw={2}><path d="M1 4h6" /></Icon></ZoomSign>
          <ZoomSlider type="range" min={0} max={100} defaultValue={53} aria-label="Zoom" />
          <ZoomSign aria-label="Zoom in"><Icon w={8} h={8} color="#666" sw={2}><path d="M0 4h8M4 0v8" /></Icon></ZoomSign>
          <ZoomValue>120%</ZoomValue>
        </ViewGroup>
      </StatusBar>
      <WordInk width="110" height="42" viewBox="0 0 110 42" aria-hidden="true">
        <path d="M84 3C72 1 56 0 46 0 36 0 28 4 24 6 14 10 4 12 3 22 1 32 8 33 20 37 36 41 60 39 72 38 90 36 102 38 105 34 108 28 106 18 104 15 96 10 88 12 82 3" />
      </WordInk>
    </WordWindow>
  );
}

function DecisionSupport() {
  return (
    <Dialog>
      <DialogTitle>Decision Support</DialogTitle>
      <DialogHead>ANSA TX Vocational/Career Module Comment</DialogHead>
      <DialogBody>
        <Panel>
          <DialogTabs><DialogTab>Reference</DialogTab></DialogTabs>
          <SearchRow>
            <SearchBox>
              <input aria-label="Search for" readOnly value="ANSA TX Vocational/Career Module Comment" />
              <Caret color="#9a9a9a" />
            </SearchBox>
            <PushButton disabled>Search</PushButton>
          </SearchRow>
          <RadioRow>
            {radios.map(r => {
              const on = r === 'Policy and procedures';
              return (
                <RadioLabel key={r} $on={on}>
                  <input type="radio" name="kind" defaultChecked={on} disabled={!on} />
                  {r}
                </RadioLabel>
              );
            })}
          </RadioRow>
          <ReferenceBox>
            <ReferenceText>{referenceLines.map((l, i) => <p key={i}>{l}</p>)}</ReferenceText>
            <OldV>
              <button aria-label="Reference scroll up"><Caret dir="up" color="#333" /></button>
              <Thumb $v><Icon w={8} h={8} color="#666"><path d="M0 .5h8M0 3.500h8M0 6.500h8" /></Icon></Thumb>
              <i />
              <button aria-label="Reference scroll down"><Caret color="#333" /></button>
            </OldV>
            <OldH>
              <button aria-label="Reference scroll left"><Caret dir="left" color="#333" /></button>
              <Thumb><Icon w={8} h={8} color="#666"><path d="M.5 0v8M3.500 0v8M6.500 0v8" /></Icon></Thumb>
              <i />
              <button aria-label="Reference scroll right"><Caret dir="right" color="#333" /></button>
            </OldH>
            <Corner />
          </ReferenceBox>
          <PrintRow><PushButton>Print</PushButton></PrintRow>
        </Panel>
      </DialogBody>
      <DialogFoot><PushButton $wide><u>O</u>K</PushButton></DialogFoot>
      <DialogInk width="140" height="290" viewBox="0 0 140 290" aria-hidden="true">
        <path d="M21 12C34 9 42 2 52 3 62 1 78 4 94 6 110 9 126 8 139 7" />
        <path d="M11 137C24 138 34 136 42 134 56 134 66 133 75 133" />
        <path d="M15 286C4 288 2 284 1 274 0 262 4 250 16 248 30 243 64 244 86 250 104 254 112 258 122 258 132 264 134 272 132 281 128 284 124 284 119 283L117 279" />
        <path d="M13 283C26 284 36 284 46 281 60 278 90 279 120 278" />
      </DialogInk>
    </Dialog>
  );
}

export default function App() {
  return (
    <>
      <GlobalStyle />
      <Desktop>
        <BackgroundApp />
        <Word />
        <DecisionSupport />
      </Desktop>
    </>
  );
}
